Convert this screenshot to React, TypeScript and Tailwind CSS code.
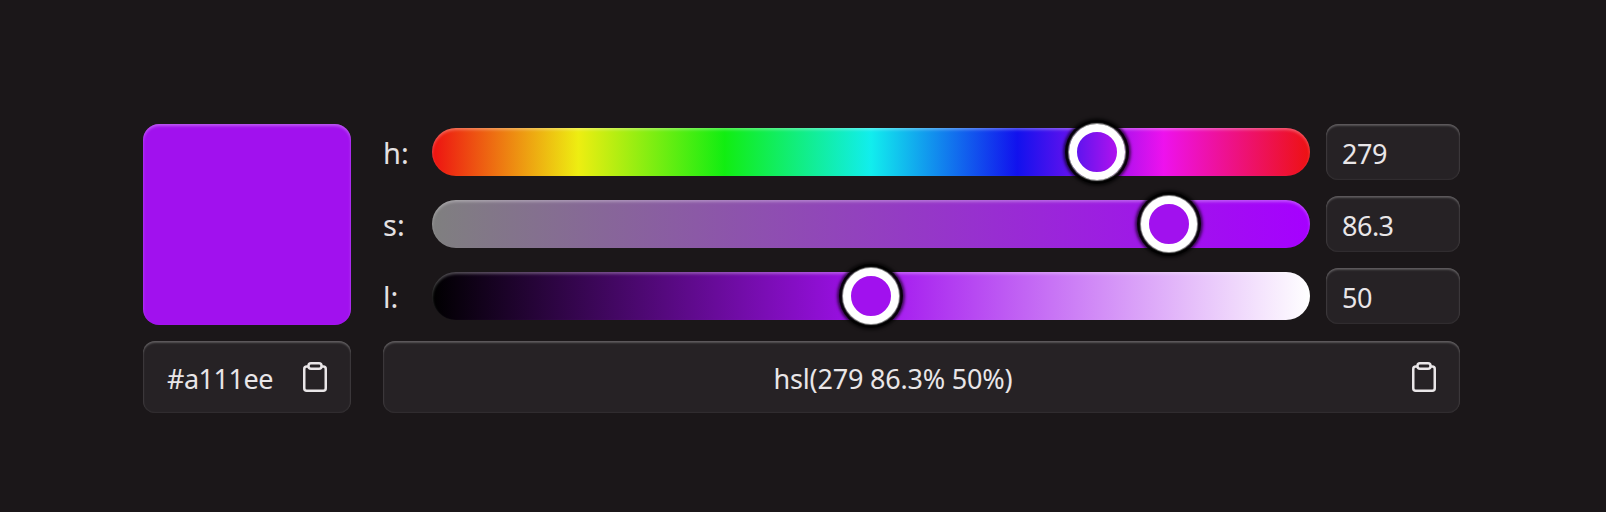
import React from 'react';

const h = 279;
const s = 86.3;
const l = 50;
const hex = '#a111ee';

// thumb travels inside the track, so it never overhangs the ends
const thumbLeft = (pct: number) => `calc((100% - 56px) * ${pct / 100} + 28px)`;

const ClipboardIcon: React.FC = () => (
  <svg width="24" height="30" viewBox="0 0 24 30" fill="none" stroke="currentColor" strokeWidth="2.5" strokeLinejoin="round">
    <rect x="1.25" y="4.5" width="21.5" height="24.25" rx="2.5" />
    <rect x="5.5" y="1.25" width="13" height="5.5" rx="2.5" fill="#262225" />
  </svg>
);

const Slider: React.FC<{ label: string; value: number; pct: number; gradient: string; thumb?: string }> = ({ label, value, pct, gradient, thumb }) => (
  <div className="flex items-center h-14">
    <span className="w-[49px] pt-0.5 text-[29px] text-[#e4e1e3]">{label}</span>
    <div className="relative flex-1 h-12 rounded-3xl" style={{ background: gradient }}>
      <div className="absolute inset-0 rounded-3xl shadow-[inset_0_2px_3px_rgba(255,255,255,0.3)]"></div>
      <div
        className="absolute top-1/2 -translate-x-1/2 -translate-y-1/2 w-14 h-14 rounded-full border-8 border-white shadow-[0_0_1px_1px_rgba(255,255,255,0.6),0_0_0_4px_rgba(0,0,0,0.85),0_0_3px_6px_rgba(0,0,0,0.65)]"
        style={{ left: thumbLeft(pct), background: thumb ?? hex }}
      ></div>
    </div>
    <div className="ml-4 w-[134px] h-14 pl-4 pt-1 flex items-center rounded-xl bg-[#262225] text-[27px] tracking-[-0.5px] text-[#e9e6e8] shadow-[inset_0_2px_2px_rgba(255,255,255,0.22),inset_0_0_2px_rgba(255,255,255,0.18)]">
      {value}
    </div>
  </div>
);

export default function App() {
  const hueStops = [0, 60, 120, 180, 240, 300, 360].map((d) => `hsl(${d} ${s}% ${l}%)`).join(', ');

  return (
    <div className="w-[1606px] h-[512px] bg-[#1b1719] pt-[124px] pl-[143px] font-['Noto_Sans','Open_Sans',sans-serif]">
      <div className="w-[1317px] grid grid-cols-[208px_1fr] gap-x-8 gap-y-4">
        <div className="h-[201px] rounded-2xl bg-[#a111ee] shadow-[inset_0_2px_3px_rgba(255,255,255,0.3)]"></div>
        <div className="flex flex-col gap-4">
          <Slider
            label="h:"
            value={h}
            pct={(h / 360) * 100}
            gradient={`linear-gradient(to right, ${hueStops})`}
            thumb="linear-gradient(to right, #5f14ee, #b012ee)"
          />
          <Slider label="s:" value={s} pct={s} gradient={`linear-gradient(to right, hsl(${h} 0% ${l}%), hsl(${h} 100% ${l}%))`} />
          <Slider label="l:" value={l} pct={l} gradient={`linear-gradient(to right, #000, ${hex}, #fff)`} />
        </div>
        <div className="relative h-[72px] pl-6 pt-1 flex items-center rounded-xl bg-[#262225] text-[27px] tracking-[-0.5px] text-[#e9e6e8] shadow-[inset_0_2px_2px_rgba(255,255,255,0.22),inset_0_0_2px_rgba(255,255,255,0.18)]">
          <span>{hex}</span>
          <span className="absolute right-6 top-[21px]"><ClipboardIcon /></span>
        </div>
        <div className="relative h-[72px] pr-[57px] pt-1 flex items-center justify-center rounded-xl bg-[#262225] text-[27px] tracking-[-0.2px] text-[#e9e6e8] shadow-[inset_0_2px_2px_rgba(255,255,255,0.22),inset_0_0_2px_rgba(255,255,255,0.18)]">
          <span>hsl({h} {s}% {l}%)</span>
          <span className="absolute right-6 top-[21px]"><ClipboardIcon /></span>
        </div>
      </div>
    </div>
  );
}
